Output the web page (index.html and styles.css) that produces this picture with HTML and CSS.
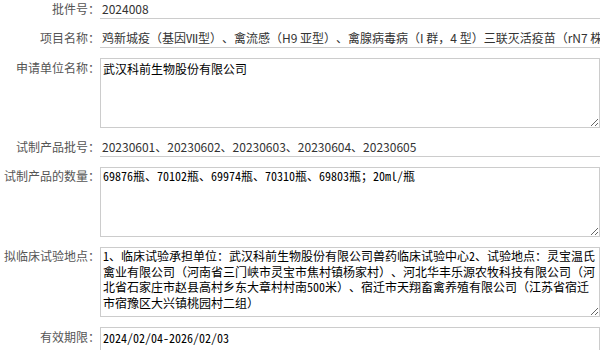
FILE: index.html
```html
<!DOCTYPE html>
<html lang="zh-CN">
<head>
<meta charset="utf-8">
<link rel="stylesheet" href="styles.css">
</head>
<body>
<div class="form">
  <div class="row">
    <div class="label">批件号：</div>
    <div class="line">2024008</div>
  </div>
  <div class="row">
    <div class="label">项目名称：</div>
    <div class="line">鸡新城疫（基因Ⅶ型）、禽流感（H9 亚型）、禽腺病毒病（I 群，4 型）三联灭活疫苗（rN7 株+rD8 株+rFAV4-Fiber2 株）</div>
  </div>
  <div class="row">
    <div class="label label-a">申请单位名称：</div>
    <textarea class="box box-a" readonly>武汉科前生物股份有限公司</textarea>
  </div>
  <div class="row">
    <div class="label">试制产品批号：</div>
    <div class="line">20230601、20230602、20230603、20230604、20230605</div>
  </div>
  <div class="row">
    <div class="label label-m">试制产品的数量：</div>
    <textarea class="box box-m" readonly>69876瓶、70102瓶、69974瓶、70310瓶、69803瓶；20ml/瓶</textarea>
  </div>
  <div class="row">
    <div class="label label-m">拟临床试验地点：</div>
    <textarea class="box box-m" readonly>1、临床试验承担单位：武汉科前生物股份有限公司兽药临床试验中心2、试验地点：灵宝温氏禽业有限公司（河南省三门峡市灵宝市焦村镇杨家村）、河北华丰乐源农牧科技有限公司（河北省石家庄市赵县高村乡东大章村村南500米）、宿迁市天翔畜禽养殖有限公司（江苏省宿迁市宿豫区大兴镇桃园村二组）</textarea>
  </div>
  <div class="row">
    <div class="label label-d">有效期限：</div>
    <textarea class="box box-d" readonly>2024/02/04-2026/02/03</textarea>
  </div>
</div>
</body>
</html>
```

FILE: styles.css
```css
html, body {
  margin: 0;
  padding: 0;
  background: #fff;
}
body {
  font-family: "Noto Sans CJK SC", "Microsoft YaHei", sans-serif;
  font-size: 12px;
  overflow: hidden;
  text-spacing-trim: space-all;
}
.form {
  display: flex;
  flex-direction: column;
  gap: 10px;
  width: 612px;
}
.row {
  display: flex;
  align-items: flex-start;
}
.label {
  width: 100px;
  flex: none;
  text-align: right;
  color: #555;
  line-height: 18px;
  white-space: nowrap;
}
.label-a { padding-top: 1px; }
.label-m { padding-top: 0; }
.label-d { padding-top: 1px; }
.line {
  width: 500px;
  box-sizing: border-box;
  height: 19px;
  line-height: 18px;
  padding-left: 2px;
  border-bottom: 1px solid #ccc;
  color: #333;
  white-space: nowrap;
  overflow: hidden;
}
.box {
  width: 500px;
  height: 70px;
  box-sizing: border-box;
  margin: 0;
  border: 1px solid #ccc;
  border-radius: 0;
  background: #fff;
  color: #000;
  font-size: 12px;
  outline: none;
  overflow: hidden;
  text-spacing-trim: space-all;
}
.box-a {
  font-family: "Noto Sans CJK SC", sans-serif;
  line-height: 18px;
  padding: 1px 2px;
}
.box-m {
  font-family: "Noto Sans Mono CJK SC", "Noto Sans CJK SC", monospace;
  line-height: 15.5px;
  padding: 0 2px;
}
.box-d {
  font-family: "Noto Sans Mono CJK SC", "Noto Sans CJK SC", monospace;
  line-height: 15px;
  padding: 2px 2px;
}
```
